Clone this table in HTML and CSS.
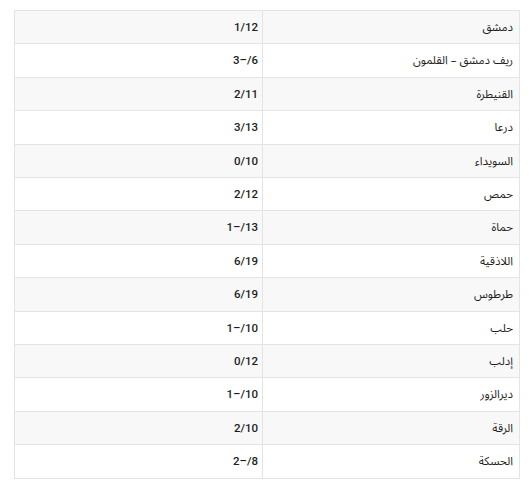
FILE: index.html
```html
<!DOCTYPE html>
<html lang="ar" dir="rtl">
<head>
<meta charset="utf-8">
<link rel="stylesheet" href="styles.css">
</head>
<body>
<table class="grid">
<tbody>
<tr><td class="name">دمشق</td><td class="val">1/12</td></tr>
<tr><td class="name">ريف دمشق – القلمون</td><td class="val">6/–3</td></tr>
<tr><td class="name">القنيطرة</td><td class="val">2/11</td></tr>
<tr><td class="name">درعا</td><td class="val">3/13</td></tr>
<tr><td class="name">السويداء</td><td class="val">0/10</td></tr>
<tr><td class="name">حمص</td><td class="val">2/12</td></tr>
<tr><td class="name">حماة</td><td class="val">13/–1</td></tr>
<tr><td class="name">اللاذقية</td><td class="val">6/19</td></tr>
<tr><td class="name">طرطوس</td><td class="val">6/19</td></tr>
<tr><td class="name">حلب</td><td class="val">10/–1</td></tr>
<tr><td class="name">إدلب</td><td class="val">0/12</td></tr>
<tr><td class="name">ديرالزور</td><td class="val">10/–1</td></tr>
<tr><td class="name">الرقة</td><td class="val">2/10</td></tr>
<tr><td class="name">الحسكة</td><td class="val">8/–2</td></tr>
</tbody>
</table>
</body>
</html>
```
FILE: styles.css
```css
html, body {
  margin: 0;
  padding: 0;
  background: #ffffff;
}
body {
  padding: 10px 9px 0 14px;
  font-family: "Noto Sans Arabic", "DejaVu Sans", sans-serif;
  color: #1e1e1e;
}
.grid {
  width: 506px;
  border-collapse: collapse;
  table-layout: fixed;
}
.grid td {
  border: 1px solid #e4e4e4;
  padding: 6px 6px;
  line-height: 20.4px;
  text-align: right;
  vertical-align: middle;
}
.grid td.name {
  width: 244px;
  font-size: 11.5px;
}
.grid tr:nth-child(odd) td {
  background: #f8f8f8;
}
.grid td.val {
  font-family: Roboto, "Noto Sans", sans-serif;
  font-size: 11.5px;
  font-weight: 500;
  padding-left: 4px;
  padding-right: 4px;
}
```
